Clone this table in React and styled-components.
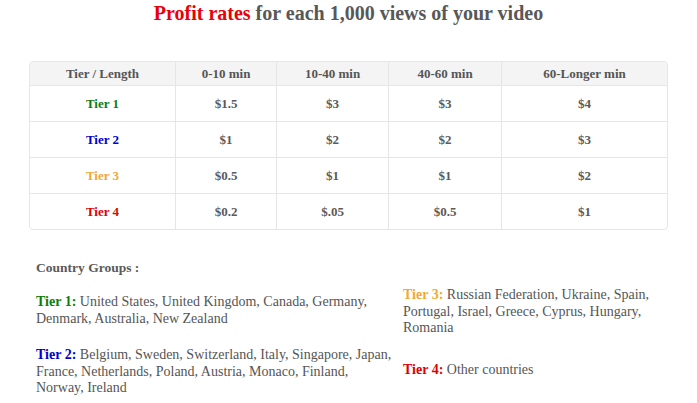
import React from "react";
import styled, { createGlobalStyle } from "styled-components";

const GlobalStyle = createGlobalStyle`
  html, body {
    margin: 0;
    padding: 0;
    background: #fff;
  }
  body {
    font-family: "Liberation Serif", "Times New Roman", serif;
    color: #555;
  }
`;

const TIER_COLORS = {
  1: "#0a800a",
  2: "#0000cc",
  3: "#f3a833",
  4: "#e00000",
};

const columns = [
  { label: "Tier / Length", width: 145 },
  { label: "0-10 min", width: 100 },
  { label: "10-40 min", width: 111 },
  { label: "40-60 min", width: 112 },
  { label: "60-Longer min", width: 165 },
];

const rates = [
  { tier: 1, values: ["$1.5", "$3", "$3", "$4"] },
  { tier: 2, values: ["$1", "$2", "$2", "$3"] },
  { tier: 3, values: ["$0.5", "$1", "$1", "$2"] },
  { tier: 4, values: ["$0.2", "$.05", "$0.5", "$1"] },
];

const Page = styled.div`
  width: 697px;
  padding: 0 29px;
  box-sizing: border-box;
`;

const Title = styled.h2`
  margin: 1px 0 0;
  font-size: 20px;
  line-height: 24px;
  font-weight: bold;
  text-align: center;
  color: #585858;
`;

const Accent = styled.span`
  color: #e8000b;
`;

const RateTable = styled.table`
  margin-top: 36px;
  width: 639px;
  table-layout: fixed;
  border-collapse: separate;
  border-spacing: 0;
  border: 1px solid #e6e6e6;
  border-radius: 4px;
  overflow: hidden;
  font-size: 13px;
  font-weight: bold;
`;

const HeadCell = styled.th`
  width: ${(p) => p.$w}px;
  height: 23px;
  padding: 0;
  background: #f4f4f4;
  color: #555;
  text-align: center;
  font-weight: bold;
  border-left: ${(p) => (p.$first ? "none" : "1px solid #e6e6e6")};
`;

const Cell = styled.td`
  height: 35px;
  padding: 0;
  text-align: center;
  color: ${(p) => p.$color || "#5a5a5a"};
  border-top: 1px solid #e6e6e6;
  border-left: ${(p) => (p.$first ? "none" : "1px solid #e6e6e6")};
`;

const Groups = styled.section`
  padding: 30px 0 0 7px;
  font-size: 14px;
  line-height: 16.5px;
`;

const GroupsHeading = styled.h4`
  margin: 0;
  font-size: 13.5px;
  line-height: 16px;
  font-weight: bold;
  color: #5a5a5a;
`;

const GroupsGrid = styled.div`
  display: grid;
  grid-template-columns: 360px 1fr;
  column-gap: 7px;
`;

const GroupColumn = styled.div`
  display: flex;
  flex-direction: column;
  gap: ${(p) => p.$gap}px;
  padding-top: ${(p) => p.$top}px;
`;

const GroupText = styled.p`
  margin: 0;
  color: #555;
`;

const TierLabel = styled.b`
  color: ${(p) => TIER_COLORS[p.$tier]};
`;

const Group = ({ tier, children }) => (
  <GroupText>
    <TierLabel $tier={tier}>Tier {tier}:</TierLabel> {children}
  </GroupText>
);

export default function App() {
  return (
    <Page>
      <GlobalStyle />
      <Title>
        <Accent>Profit rates</Accent> for each 1,000 views of your video
      </Title>

      <RateTable>
        <thead>
          <tr>
            {columns.map((c, i) => (
              <HeadCell key={c.label} $w={c.width} $first={i === 0}>
                {c.label}
              </HeadCell>
            ))}
          </tr>
        </thead>
        <tbody>
          {rates.map((r) => (
            <tr key={r.tier}>
              <Cell $first $color={TIER_COLORS[r.tier]}>
                Tier {r.tier}
              </Cell>
              {r.values.map((v, i) => (
                <Cell key={i}>{v}</Cell>
              ))}
            </tr>
          ))}
        </tbody>
      </RateTable>

      <Groups>
        <GroupsHeading>Country Groups :</GroupsHeading>
        <GroupsGrid>
          <GroupColumn $top={18} $gap={20}>
            <Group tier={1}>
              United States, United Kingdom, Canada, Germany, Denmark,
              Australia, New Zealand
            </Group>
            <Group tier={2}>
              Belgium, Sweden, Switzerland, Italy, Singapore, Japan, France,
              Netherlands, Poland, Austria, Monaco, Finland, Norway, Ireland
            </Group>
          </GroupColumn>
          <GroupColumn $top={11} $gap={25}>
            <Group tier={3}>
              Russian Federation, Ukraine, Spain, Portugal, Israel, Greece,
              Cyprus, Hungary, Romania
            </Group>
            <Group tier={4}>Other countries</Group>
          </GroupColumn>
        </GroupsGrid>
      </Groups>
    </Page>
  );
}
